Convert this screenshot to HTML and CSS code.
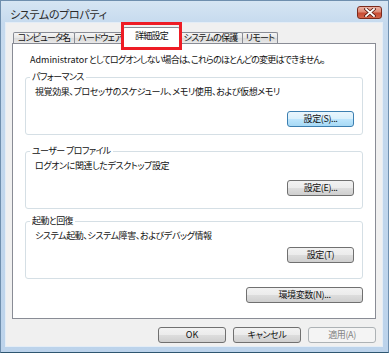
FILE: index.html
```html
<!DOCTYPE html>
<html lang="ja">
<head>
<meta charset="utf-8">
<title>システムのプロパティ</title>
<link rel="stylesheet" href="styles.css">
</head>
<body>
<div class="window">
  <div class="titlebar">
    <span class="title">システムのプロパティ</span>
    <span class="close" aria-label="閉じる">
      <svg width="12" height="9" viewBox="0 0 12 9"><path d="M2 1 L10 8 M10 1 L2 8" stroke="#5a1a10" stroke-width="3.4" stroke-linecap="square"/><path d="M2 1 L10 8 M10 1 L2 8" stroke="#fff" stroke-width="1.8" stroke-linecap="square"/></svg>
    </span>
  </div>
  <div class="client">
    <div class="tabs">
      <div class="tab t1">コンピュータ名</div>
      <div class="tab t2">ハードウェア</div>
      <div class="tab t3 active">詳細設定</div>
      <div class="tab t4">システムの保護</div>
      <div class="tab t5">リモート</div>
    </div>
    <div class="panel">
      <p class="note"><span class="latin">Administrator</span> としてログオンしない場合は、これらのほとんどの変更はできません。</p>
      <fieldset class="group g1">
        <legend>パフォーマンス</legend>
        <p class="desc">視覚効果、プロセッサのスケジュール、メモリ使用、および仮想メモリ</p>
        <div class="btn-row"><span class="btn focus">設定(S)...</span></div>
      </fieldset>
      <fieldset class="group g2">
        <legend>ユーザー プロファイル</legend>
        <p class="desc">ログオンに関連したデスクトップ設定</p>
        <div class="btn-row"><span class="btn">設定(E)...</span></div>
      </fieldset>
      <fieldset class="group g3">
        <legend>起動と回復</legend>
        <p class="desc">システム起動、システム障害、およびデバッグ情報</p>
        <div class="btn-row"><span class="btn">設定(T)</span></div>
      </fieldset>
      <div class="env-row"><span class="btn wide">環境変数(N)...</span></div>
    </div>
    <div class="footer">
      <span class="btn fbtn"><span class="latin">OK</span></span>
      <span class="btn fbtn">キャンセル</span>
      <span class="btn fbtn disabled">適用(A)</span>
    </div>
  </div>
  <div class="highlight"></div>
</div>
</body>
</html>
```
FILE: styles.css
```css
* { box-sizing: border-box; }
html, body { margin: 0; padding: 0; }
body {
  width: 389px;
  height: 353px;
  overflow: hidden;
  font-family: "Noto Sans CJK JP", "Noto Sans", sans-serif;
  font-size: 9px;
  letter-spacing: -0.8px;
  font-feature-settings: "palt";
  color: #111;
}
.latin { letter-spacing: 0; }
.window {
  position: relative;
  width: 389px;
  height: 353px;
  border: 1px solid #6f8fae;
  border-bottom-color: #2e5670;
  background: linear-gradient(#d6e5f3 0, #c6daee 22px, #bcd3eb 100%);
}
.titlebar {
  height: 22px;
  display: flex;
  align-items: center;
  justify-content: space-between;
  padding: 0 6px 0 9px;
}
.title {
  font-size: 11px;
  color: #2a2a2a;
  letter-spacing: -0.3px;
  line-height: 14px;
  margin-top: 3px;
}
.close {
  width: 25px;
  height: 13px;
  margin-top: 1px;
  border: 1px solid #7b2b1d;
  border-radius: 3px;
  background: linear-gradient(#eab1a3 0, #de8a75 45%, #c84b33 55%, #d2644a 100%);
  display: flex;
  align-items: center;
  justify-content: center;
}
.client {
  margin-left: 5px;
  width: 376px;
  height: 323px;
  background: #f0f0f0;
  box-shadow: 0 0 0 1px #e4edf6;
}
.tabs {
  height: 20px;
  display: flex;
  align-items: flex-end;
  padding-left: 7px;
}
.tab {
  height: 11px;
  line-height: 10px;
  margin-right: -1px;
  border: 1px solid #898c95;
  border-bottom: none;
  border-radius: 2px 2px 0 0;
  background: linear-gradient(#f5f5f5, #e6e6e6 50%, #d9d9d9 51%, #e9e9e9);
  text-align: center;
  white-space: nowrap;
  overflow: hidden;
}
.t1 { width: 62px; }
.t2 { width: 52px; }
.t3 { width: 57px; }
.t4 { width: 65px; }
.t5 { width: 36px; }
.tab.active {
  position: relative;
  z-index: 1;
  height: 17px;
  line-height: 15px;
  margin: 0 -2px -1px -2px;
  background: #fff;
}
.panel {
  margin-left: 6px;
  width: 364px;
  height: 276px;
  border: 1px solid #898c95;
  background: #fff;
  padding: 9px 12px 0 12px;
}
.note {
  margin: 0 0 0 5px;
  line-height: 14px;
  white-space: nowrap;
}
.group {
  margin: 4px 0 0 0;
  height: 64px;
  padding: 2px 8px 0 9px;
  border: 1px solid #d5dfe5;
  border-radius: 3px;
  min-width: 0;
}
.group legend {
  padding: 0 2px;
  margin-left: -5px;
  line-height: 12px;
  letter-spacing: -0.6px;
}
.g2 { margin-top: 10px; }
.g3 { margin-top: 6px; }
.desc {
  margin: 0;
  line-height: 14px;
  white-space: nowrap;
  letter-spacing: -0.4px;
}
.btn-row {
  display: flex;
  justify-content: flex-end;
}
.g1 .btn-row { margin-top: 12px; }
.g2 .btn-row { margin-top: 7px; }
.g3 .btn-row { margin-top: 4px; }
.btn {
  display: inline-block;
  width: 67px;
  height: 16px;
  line-height: 14px;
  text-align: center;
  border: 1px solid #707070;
  border-radius: 3px;
  background: linear-gradient(#f2f2f2 0, #ebebeb 50%, #dddddd 51%, #cfcfcf 100%);
  white-space: nowrap;
  letter-spacing: -0.4px;
}
.btn.focus {
  border-color: #3c7fb1;
  background: linear-gradient(#eaf6fd 0, #d9f0fc 50%, #bee6fd 51%, #a7d9f5 100%);
}
.env-row {
  display: flex;
  justify-content: flex-end;
  margin-top: 8px;
}
.btn.wide { width: 117px; }
.footer {
  display: flex;
  justify-content: flex-end;
  gap: 7px;
  padding: 8px 6px 0 0;
}
.fbtn { width: 68px; }
.btn.disabled {
  border-color: #adb2b5;
  background: #f4f4f4;
  color: #838383;
}
.highlight {
  position: absolute;
  left: 120px;
  top: 21px;
  width: 61px;
  height: 28px;
  border: 3px solid #ee1c25;
  pointer-events: none;
  z-index: 5;
}
```
